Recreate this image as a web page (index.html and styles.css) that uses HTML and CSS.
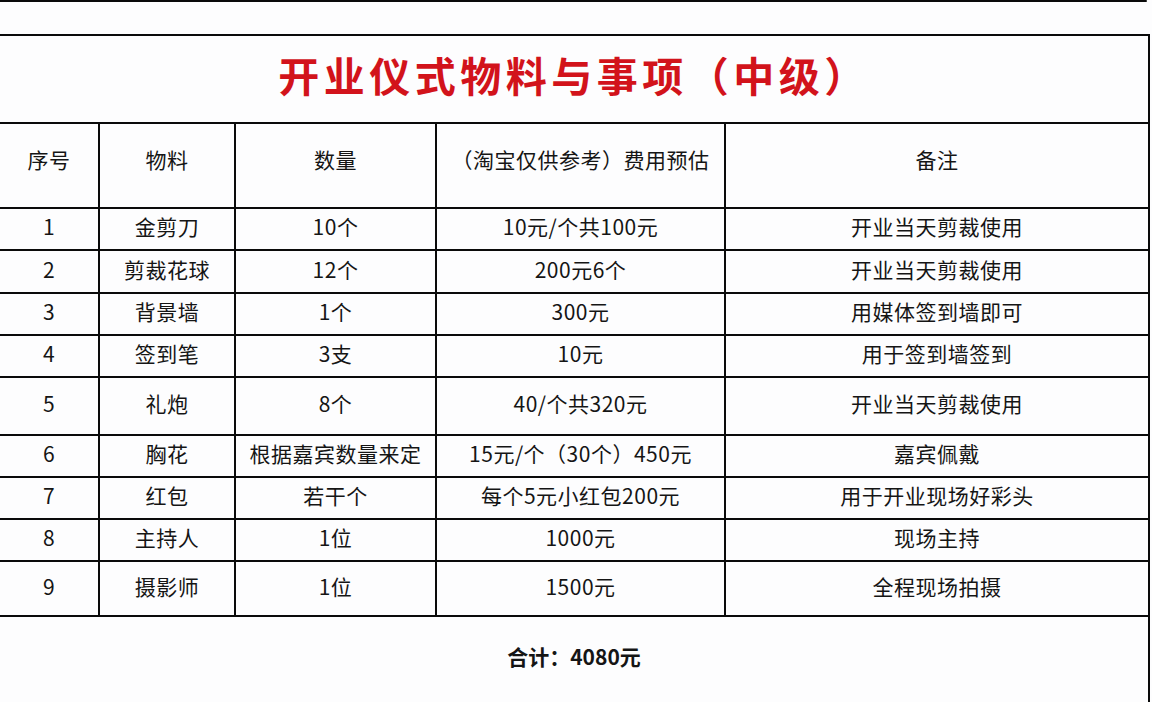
FILE: index.html
```html
<!DOCTYPE html>
<html lang="zh-CN">
<head>
<meta charset="utf-8">
<title>开业仪式物料与事项（中级）</title>
<link rel="stylesheet" href="styles.css">
</head>
<body>
<div class="page">
  <div class="top-rule"></div>
  <table class="sheet">
    <colgroup>
      <col class="c-no">
      <col class="c-item">
      <col class="c-qty">
      <col class="c-cost">
      <col class="c-note">
    </colgroup>
    <tr class="r-title"><td colspan="5" class="title">开业仪式物料与事项（中级）</td></tr>
    <tr class="r-head">
      <td>序号</td><td>物料</td><td>数量</td><td>（淘宝仅供参考）费用预估</td><td>备注</td>
    </tr>
    <tr class="r-42"><td>1</td><td>金剪刀</td><td>10个</td><td>10元/个共100元</td><td>开业当天剪裁使用</td></tr>
    <tr class="r-43"><td>2</td><td>剪裁花球</td><td>12个</td><td>200元6个</td><td>开业当天剪裁使用</td></tr>
    <tr class="r-42"><td>3</td><td>背景墙</td><td>1个</td><td>300元</td><td>用媒体签到墙即可</td></tr>
    <tr class="r-42"><td>4</td><td>签到笔</td><td>3支</td><td>10元</td><td>用于签到墙签到</td></tr>
    <tr class="r-58"><td>5</td><td>礼炮</td><td>8个</td><td>40/个共320元</td><td>开业当天剪裁使用</td></tr>
    <tr class="r-42"><td>6</td><td>胸花</td><td>根据嘉宾数量来定</td><td>15元/个（30个）450元</td><td>嘉宾佩戴</td></tr>
    <tr class="r-42"><td>7</td><td>红包</td><td>若干个</td><td>每个5元小红包200元</td><td>用于开业现场好彩头</td></tr>
    <tr class="r-42"><td>8</td><td>主持人</td><td>1位</td><td>1000元</td><td>现场主持</td></tr>
    <tr class="r-55"><td>9</td><td>摄影师</td><td>1位</td><td>1500元</td><td>全程现场拍摄</td></tr>
    <tr class="r-total"><td colspan="5" class="total">合计：4080元</td></tr>
  </table>
</div>
</body>
</html>
```

FILE: styles.css
```css
html, body {
  margin: 0;
  padding: 0;
  overflow: hidden;
  background: #fdfdfe;
}

.page {
  display: flex;
  flex-direction: column;
  gap: 32px;
  width: 1152px;
  height: 702px;
}

.top-rule {
  flex: none;
  width: 1147px;
  height: 2px;
  background: #0a0a0a;
  border-radius: 0 1px 1px 0;
}

.sheet {
  flex: none;
  width: 1149px;
  table-layout: fixed;
  border-collapse: collapse;
  font-family: "Noto Sans CJK SC", "Noto Sans", sans-serif;
  font-size: 21px;
  letter-spacing: 0.5px;
  color: #151515;
}

.c-no { width: 99px; }
.c-item { width: 136px; }
.c-qty { width: 201px; }
.c-cost { width: 289px; }
.c-note { width: 424px; }

.sheet td {
  border: 2px solid #0a0a0a;
  text-align: center;
  vertical-align: middle;
  padding: 0 0 4px 0;
  white-space: nowrap;
  line-height: 1.2;
}

.sheet td:first-child {
  border-left: none;
}

.r-title { height: 88px; }
.r-head { height: 85px; }
.r-42 { height: 42px; }
.r-43 { height: 43px; }
.r-58 { height: 58px; }
.r-55 { height: 55px; }
.r-total { height: 96px; }

.sheet .title {
  font-size: 41px;
  font-weight: 700;
  letter-spacing: 4.5px;
  color: #d2131b;
  padding: 0 0 8px 0;
}

.r-head td {
  padding-bottom: 12px;
}

.sheet .total {
  font-size: 21px;
  font-weight: 700;
  letter-spacing: 0;
  padding-bottom: 14px;
}
```
